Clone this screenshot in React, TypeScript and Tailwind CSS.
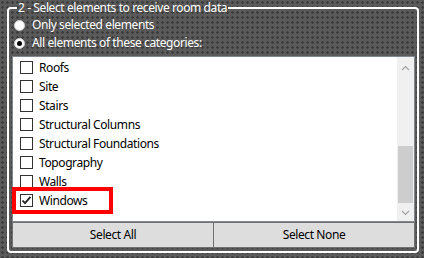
import React from "react";

const items = [
  "Roofs",
  "Site",
  "Stairs",
  "Structural Columns",
  "Structural Foundations",
  "Topography",
  "Walls",
];

function Box({ checked }: { checked?: boolean }) {
  return (
    <span className="w-[13px] h-[13px] border border-[#333333] bg-white flex items-center justify-center shrink-0">
      {checked && (
        <svg width="11" height="11" viewBox="0 0 11 11">
          <path d="M1.5 5.5 L4 8.2 L9.5 1.8" fill="none" stroke="#222" strokeWidth="1.8" />
        </svg>
      )}
    </span>
  );
}

export default function App() {
  return (
    <div
      className="w-[424px] h-[258px] bg-[#5a5a5a] bg-[radial-gradient(circle_at_center,#3c3c3c_1px,transparent_1.5px)] bg-[length:5px_5px] pl-[7px] pr-[5px] pt-[1px] pb-[5px] tracking-[-0.4px]"
      style={{ fontFamily: '"Noto Sans", sans-serif' }}
    >
      <fieldset className="h-full border-2 border-white rounded-[4px] pl-[3px] pr-[2px] pb-[3px] flex flex-col min-w-0">
        <legend className="ml-[5px] px-[1px] text-white text-[12px] leading-[14px]">
          2 - Select elements to receive room data
        </legend>
        <div className="flex flex-col mt-[3px] gap-[4px] pl-[2px]">
          <div className="flex items-center gap-[7px] h-[14px]">
            <span className="w-[11px] h-[11px] rounded-full bg-white border border-[#d0d0d0]" />
            <span className="text-white text-[12px]">Only selected elements</span>
          </div>
          <div className="flex items-center gap-[7px] h-[14px]">
            <span className="w-[11px] h-[11px] rounded-full bg-white border border-[#d0d0d0] flex items-center justify-center">
              <span className="w-[5px] h-[5px] rounded-full bg-black" />
            </span>
            <span className="text-white text-[12px]">All elements of these categories:</span>
          </div>
        </div>
        <div className="mt-[6px] flex-1 flex flex-col border border-[#828790] bg-white">
          <div className="flex-1 flex min-h-0">
            <div className="flex-1 flex flex-col pt-[1px]">
              {items.map((t) => (
                <div key={t} className="h-[19px] flex items-center gap-[6px] pl-[7px] text-[12px] text-black">
                  <Box />
                  <span>{t}</span>
                </div>
              ))}
              <div className="relative h-[19px] flex items-center gap-[6px] pl-[7px] text-[12px] text-black">
                <span className="absolute left-[-1px] top-[-4px] w-[101px] h-[27px] border-[4px] border-[#ff0000]" />
                <Box checked />
                <span>Windows</span>
              </div>
            </div>
            <div className="w-[17px] bg-[#f0f0f0] flex flex-col items-center">
              <div className="h-[17px] flex items-center justify-center mt-[2px]">
                <svg width="9" height="6" viewBox="0 0 9 6">
                  <path d="M1 5 L4.5 1.5 L8 5" fill="none" stroke="#a3a3a3" strokeWidth="1.2" />
                </svg>
              </div>
              <div className="flex-1 w-full flex flex-col">
                <div className="h-[70px]" />
                <div className="h-[57px] mx-[1px] bg-[#cdcdcd]" />
                <div className="flex-1" />
              </div>
              <div className="h-[17px] flex items-center justify-center">
                <svg width="9" height="6" viewBox="0 0 9 6">
                  <path d="M1 1 L4.5 4.5 L8 1" fill="none" stroke="#a3a3a3" strokeWidth="1.2" />
                </svg>
              </div>
            </div>
          </div>
        </div>
        <div className="flex h-[26px]">
          <button className="flex-1 bg-[#dddddd] border border-[#707070] text-[12px] text-black">
            Select All
          </button>
          <button className="flex-1 bg-[#dddddd] border border-[#707070] border-l-0 text-[12px] text-black">
            Select None
          </button>
        </div>
      </fieldset>
    </div>
  );
}
